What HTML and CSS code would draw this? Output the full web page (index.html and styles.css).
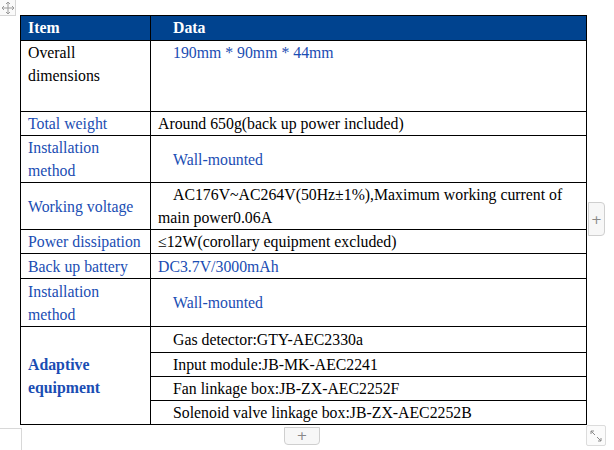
FILE: index.html
```html
<!DOCTYPE html>
<html>
<head>
<meta charset="utf-8">
<link rel="stylesheet" href="styles.css">
</head>
<body>
<div class="page">
  <table class="spec">
    <colgroup><col class="c1"><col class="c2"></colgroup>
    <thead>
      <tr class="head"><th>Item</th><th class="ind">Data</th></tr>
    </thead>
    <tbody>
      <tr class="h70"><td class="top">Overall<br>dimensions</td><td class="top blue ind">190mm * 90mm * 44mm</td></tr>
      <tr class="h23"><td class="blue">Total weight</td><td>Around 650g(back up power included)</td></tr>
      <tr class="h46"><td class="blue">Installation<br>method</td><td class="blue ind">Wall-mounted</td></tr>
      <tr class="h46"><td class="blue">Working voltage</td><td class="ind">AC176V~AC264V(50Hz±1%),Maximum working current of main power0.06A</td></tr>
      <tr class="h23"><td class="blue">Power dissipation</td><td>≤12W(corollary equipment excluded)</td></tr>
      <tr class="h24"><td class="blue">Back up battery</td><td class="blue">DC3.7V/3000mAh</td></tr>
      <tr class="h47"><td class="blue">Installation<br>method</td><td class="blue ind">Wall-mounted</td></tr>
      <tr class="h25"><td rowspan="4" class="blue bold">Adaptive<br>equipment</td><td class="ind">Gas detector:GTY-AEC2330a</td></tr>
      <tr class="h23"><td class="ind">Input module:JB-MK-AEC2241</td></tr>
      <tr class="h22"><td class="ind">Fan linkage box:JB-ZX-AEC2252F</td></tr>
      <tr class="h23"><td class="ind">Solenoid valve linkage box:JB-ZX-AEC2252B</td></tr>
    </tbody>
  </table>

  <div class="move-handle">
    <svg width="14" height="14" viewBox="0 0 14 14"><path d="M7 1v12M1 7h12M5 3l2-2 2 2M5 11l2 2 2-2M3 5L1 7l2 2M11 5l2 2-2 2" fill="none" stroke="#9a9a9a" stroke-width="1"/></svg>
  </div>
  <div class="add-col">+</div>
  <div class="add-row">+</div>
  <div class="resize">
    <svg width="14" height="14" viewBox="0 0 14 14"><path d="M2 2l4 4M2 2h3M2 2v3" fill="none" stroke="#8a8a8a" stroke-width="1"/><path d="M12 12l-4-4M12 12h-3M12 12v-3" fill="none" stroke="#8a8a8a" stroke-width="1"/></svg>
  </div>
  <div class="corner"></div>
</div>
</body>
</html>
```
FILE: styles.css
```css
html, body { margin: 0; padding: 0; background: #fff; }
.page {
  position: relative;
  width: 614px;
  height: 450px;
  overflow: hidden;
  padding: 15px 0 0 20px;
  box-sizing: border-box;
  font-family: "Liberation Serif", "Times New Roman", serif;
  font-size: 15.8px;
  color: #000;
}
.spec {
  border-collapse: collapse;
  table-layout: fixed;
  width: 566px;
}
.c1 { width: 130px; }
.c2 { width: 436px; }
.spec th, .spec td {
  border: 1px solid #000;
  padding: 0 7px;
  line-height: 23px;
  vertical-align: middle;
  text-align: left;
}
.head th {
  background: #00438f;
  color: #fff;
  font-weight: bold;
  height: 24px;
  line-height: 22px;
}
.ind { text-indent: 15px; }
.top { vertical-align: top !important; }
.blue { color: #1a4db3; }
.bold { font-weight: bold; }
.h70 td { height: 70px; }
.h47 td { height: 47px; }
.h46 td { height: 46px; }
.h25 td { height: 25px; }
.h24 td { height: 24px; }
.h23 td { height: 23px; }
.h22 td { height: 22px; }
.h25 td[rowspan] { height: auto; }

.move-handle {
  position: absolute;
  left: 0; top: 0;
  width: 15px; height: 15px;
  border: 1px solid #d6d6d6;
  border-top: none; border-left: none;
  background: #fafafa;
  display: flex; align-items: center; justify-content: center;
}
.add-col {
  position: absolute;
  left: 588px; top: 202px;
  width: 15px; height: 32px;
  border: 1px solid #cfcfcf;
  border-radius: 0 4px 4px 0;
  background: #f7f7f7;
  color: #888;
  font-family: "DejaVu Sans", sans-serif;
  font-size: 13px;
  display: flex; align-items: center; justify-content: center;
}
.add-row {
  position: absolute;
  left: 284px; top: 427px;
  width: 34px; height: 16px;
  border: 1px solid #cfcfcf;
  border-radius: 0 0 4px 4px;
  background: #f7f7f7;
  color: #888;
  font-family: "DejaVu Sans", sans-serif;
  font-size: 13px;
  line-height: 16px;
  text-align: center;
}
.resize {
  position: absolute;
  left: 586px; top: 425px;
  width: 18px; height: 19px;
  border: 1px solid #dcdcdc;
  border-radius: 2px;
  background: #fbfbfb;
  display: flex; align-items: center; justify-content: center;
}
.corner {
  position: absolute;
  left: 0; top: 428px;
  width: 21px; height: 30px;
  border-top: 1px solid #d8d8d8;
  border-right: 1px solid #d8d8d8;
}
```
